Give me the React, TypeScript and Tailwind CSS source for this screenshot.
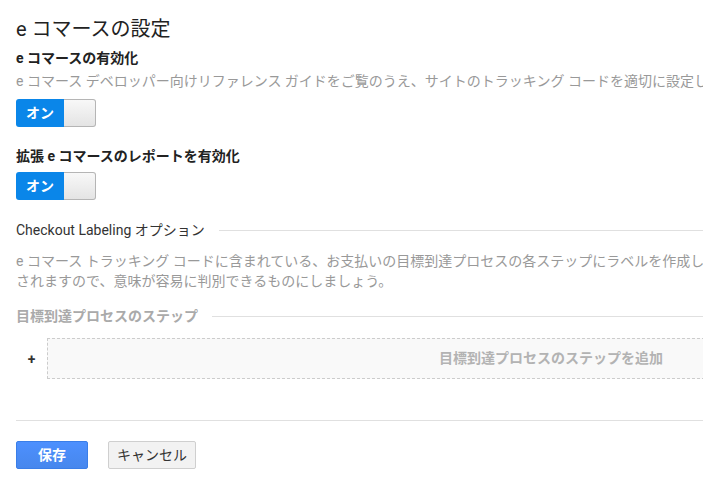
import React from "react";

const FONT = { fontFamily: 'Roboto, "Noto Sans CJK JP", sans-serif' };

function Toggle() {
  return (
    <div className="flex h-[28px] w-[80px]">
      <div className="flex w-[48px] items-center justify-center rounded-l-[3px] bg-[#0a86e9] text-[14px] font-bold leading-none text-white">
        オン
      </div>
      <div className="flex-1 rounded-r-[3px] border border-l-0 border-[#b5b5b5] bg-gradient-to-b from-[#f8f8f8] to-[#e4e4e4]" />
    </div>
  );
}

function SectionHeader({ label, muted }: { label: string; muted?: boolean }) {
  return (
    <div className="flex items-center gap-[14px]">
      <span
        className={
          muted
            ? "text-[14px] font-bold leading-[20px] text-[#aaa]"
            : "text-[14px] leading-[20px] text-[#333]"
        }
      >
        {label}
      </span>
      <div className="h-px flex-1 bg-[#e0e0e0]" />
    </div>
  );
}

export default function App() {
  return (
    <div className="h-[496px] w-[703px] overflow-hidden bg-white" style={FONT}>
      <div className="flex w-[1100px] flex-col pl-4 pt-[15px]">
        <h1 className="text-[20px] font-normal leading-[28px] text-[#222]">e コマースの設定</h1>

        <h2 className="mt-[5px] text-[14px] font-bold leading-[20px] text-[#222]">e コマースの有効化</h2>
        <p className="mt-[3px] whitespace-nowrap text-[14px] leading-[20px] text-[#999]">
          e コマース デベロッパー向けリファレンス ガイドをご覧のうえ、サイトのトラッキング コードを適切に設定してください。
        </p>
        <div className="mt-2">
          <Toggle />
        </div>

        <h2 className="mt-[19px] text-[14px] font-bold leading-[20px] text-[#222]">拡張 e コマースのレポートを有効化</h2>
        <div className="mt-[6px]">
          <Toggle />
        </div>

        <div className="mt-5 w-[1084px]">
          <SectionHeader label="Checkout Labeling オプション" />
        </div>
        <p className="mt-[11px] whitespace-nowrap text-[14px] leading-[20px] text-[#999]">
          e コマース トラッキング コードに含まれている、お支払いの目標到達プロセスの各ステップにラベルを作成します。
          <br />
          されますので、意味が容易に判別できるものにしましょう。
        </p>

        <div className="mt-[15px] w-[1084px]">
          <SectionHeader label="目標到達プロセスのステップ" muted />
        </div>

        <div className="mt-3 flex items-center">
          <span className="w-[31px] text-center text-[14px] font-bold leading-none text-[#333]">+</span>
          <div className="flex h-[41px] w-[1008px] items-center justify-center border border-dashed border-[#ccc] bg-[#f9f9f9] text-[14px] font-bold text-[#b3b3b3]">
            目標到達プロセスのステップを追加
          </div>
        </div>

        <div className="mt-[41px] h-px w-[1084px] bg-[#e0e0e0]" />

        <div className="mt-5 flex gap-5">
          <button className="flex h-[28px] w-[72px] items-center justify-center rounded-[2px] border border-[#3a7ee8] bg-gradient-to-b from-[#4d90fe] to-[#4787ed] text-[14px] font-bold text-white">
            保存
          </button>
          <button className="flex h-[28px] w-[88px] items-center justify-center rounded-[2px] border border-[#cfcfcf] bg-[#f2f2f2] text-[14px] text-[#333]">
            キャンセル
          </button>
        </div>
      </div>
    </div>
  );
}
